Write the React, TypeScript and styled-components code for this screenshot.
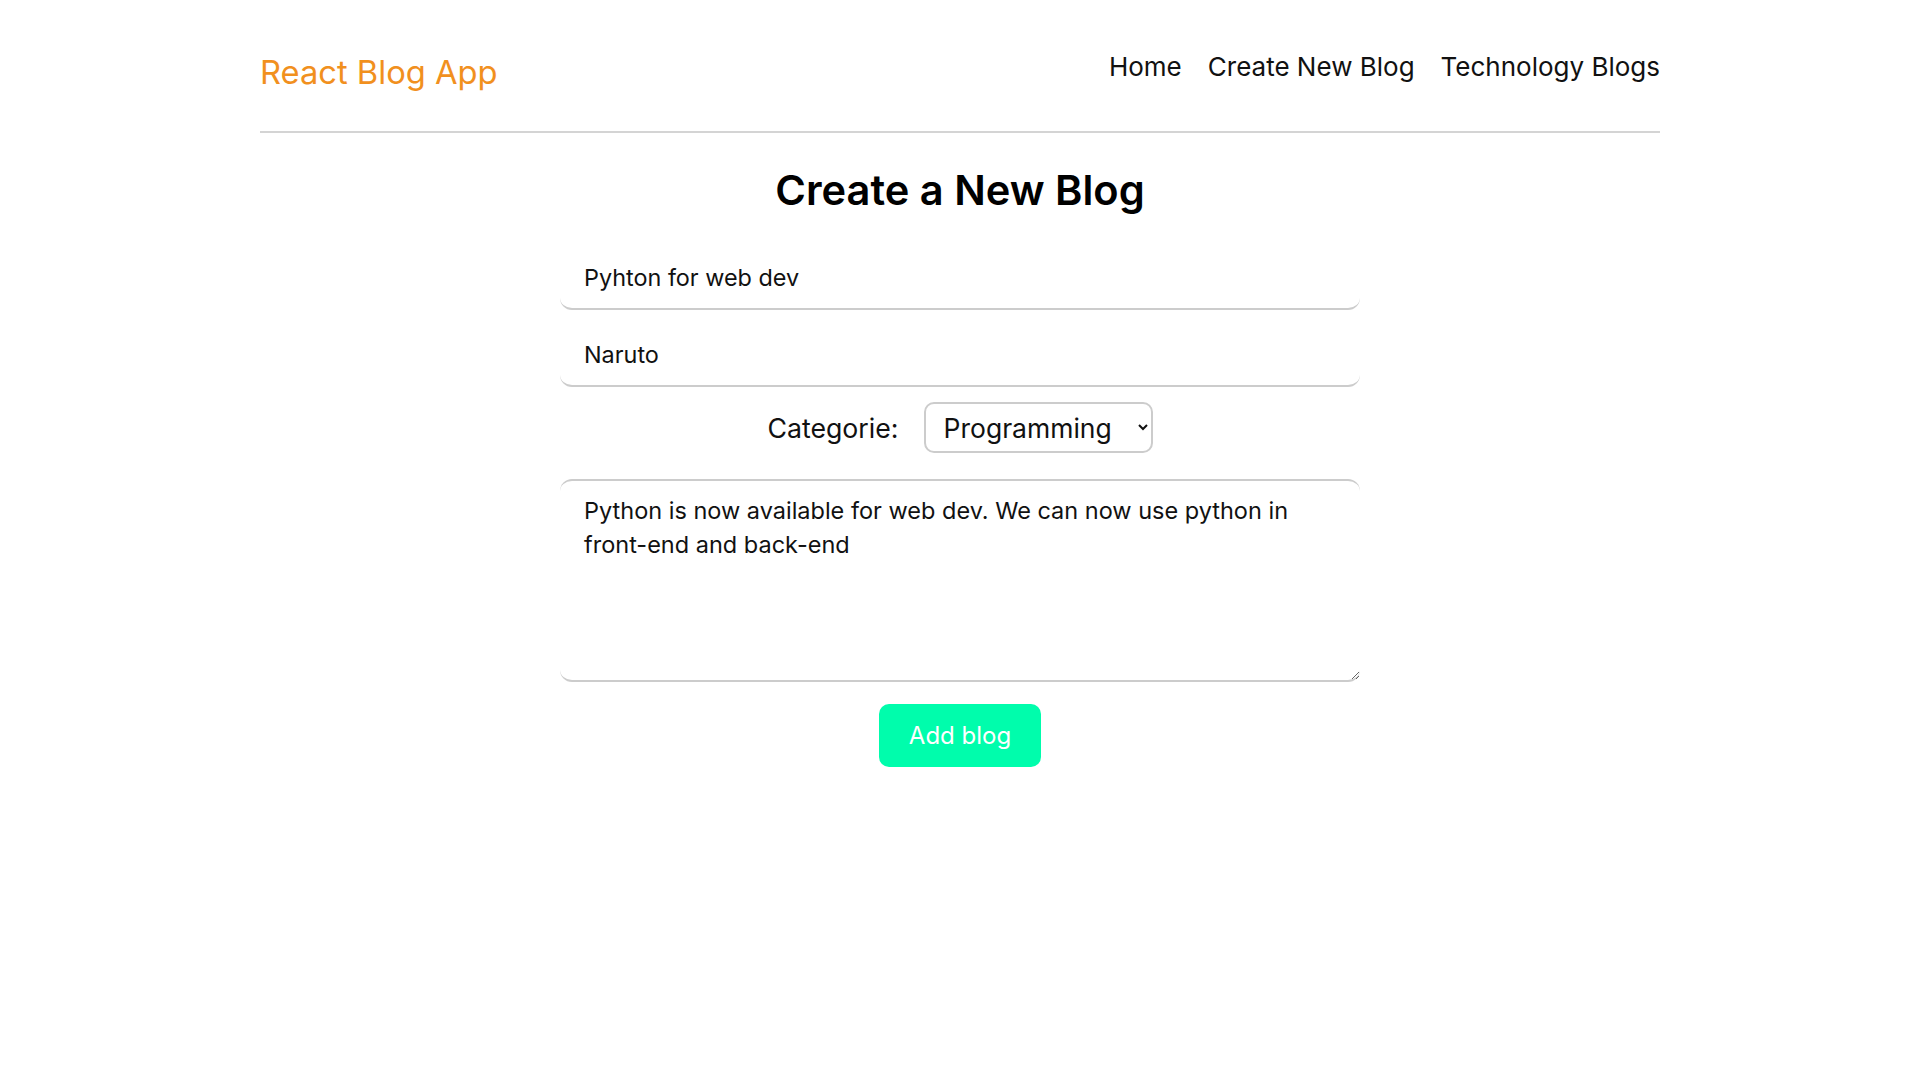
import { useEffect, useRef, useState } from 'react';
import styled, { createGlobalStyle } from 'styled-components';

const GlobalStyle = createGlobalStyle`
  * {
    box-sizing: border-box;
  }

  body {
    margin: 0;
    background: #ffffff;
    color: #111111;
    font-family: Inter, 'Noto Sans', 'Liberation Sans', sans-serif;
  }
`;

const categories = ['Programming', 'Technology', 'Lifestyle', 'Travel'];

export default function App() {
  const [title, setTitle] = useState('Pyhton for web dev');
  const [author, setAuthor] = useState('Naruto');
  const [category, setCategory] = useState('Programming');
  const [body, setBody] = useState(
    'Python is now available for web dev. We can now use python in front-end and back-end'
  );
  const bodyRef = useRef<HTMLTextAreaElement>(null);

  useEffect(() => {
    const el = bodyRef.current;
    if (!el) return;
    el.focus();
    el.setSelectionRange(el.value.length, el.value.length);
  }, []);

  return (
    <>
      <GlobalStyle />
      <Page>
        <Navbar>
          <Logo>React Blog App</Logo>
          <Links>
            <NavLink href="#">Home</NavLink>
            <NavLink href="#">Create New Blog</NavLink>
            <NavLink href="#">Technology Blogs</NavLink>
          </Links>
        </Navbar>

        <Create>
          <Heading>Create a New Blog</Heading>
          <Form onSubmit={(e) => e.preventDefault()}>
            <TextInput
              type="text"
              value={title}
              onChange={(e) => setTitle(e.target.value)}
            />
            <TextInput
              type="text"
              value={author}
              $top={13}
              onChange={(e) => setAuthor(e.target.value)}
            />
            <CategoryRow>
              <Label htmlFor="category">Categorie:</Label>
              <Select
                id="category"
                value={category}
                onChange={(e) => setCategory(e.target.value)}
              >
                {categories.map((c) => (
                  <option key={c} value={c}>
                    {c}
                  </option>
                ))}
              </Select>
            </CategoryRow>
            <BodyArea
              ref={bodyRef}
              value={body}
              onChange={(e) => setBody(e.target.value)}
            />
            <AddButton type="submit">Add blog</AddButton>
          </Form>
        </Create>
      </Page>
    </>
  );
}

/* STYLES **********************************************************/

const Page = styled.div`
  max-width: 1400px;
  margin: 0 auto;
`;

const Navbar = styled.nav`
  display: flex;
  align-items: flex-start;
  justify-content: space-between;
  height: 133px;
  padding-top: 51px;
  border-bottom: 2px solid #d4d4d4;
`;

const Logo = styled.h1`
  margin: 0;
  padding-top: 1px;
  font-size: 32.7px;
  font-weight: 400;
  line-height: 40px;
  color: #f1901e;
`;

const Links = styled.div`
  display: flex;
  gap: 26px;
`;

const NavLink = styled.a`
  font-size: 26px;
  line-height: 31px;
  color: #111111;
  text-decoration: none;
`;

const Create = styled.main`
  display: flex;
  flex-direction: column;
  align-items: center;
  padding-top: 33px;
`;

const Heading = styled.h2`
  margin: 0;
  font-size: 41.6px;
  line-height: 48px;
  font-weight: 600;
  color: #000000;
`;

const Form = styled.form`
  display: flex;
  flex-direction: column;
  align-items: center;
  width: 800px;
  margin-top: 32px;
`;

const TextInput = styled.input<{ $top?: number }>`
  width: 100%;
  height: 64px;
  margin-top: ${(p) => p.$top ?? 0}px;
  padding: 0 24px;
  border: none;
  border-bottom: 2px solid #cccccc;
  border-radius: 12px;
  font-family: inherit;
  font-size: 23.4px;
  color: #111111;
  background: #ffffff;
  outline: none;
`;

const CategoryRow = styled.div`
  display: flex;
  align-items: center;
  gap: 25px;
  margin-top: 15px;
`;

const Label = styled.label`
  font-size: 26.7px;
  color: #111111;
`;

const Select = styled.select`
  width: 229px;
  height: 51px;
  padding: 0 10px 0 14px;
  border: 2px solid #cccccc;
  border-radius: 10px;
  background: #ffffff;
  font-family: inherit;
  font-size: 26.5px;
  color: #111111;
  outline: none;
`;

const BodyArea = styled.textarea`
  width: 100%;
  height: 203px;
  margin-top: 26px;
  padding: 13px 24px;
  border: none;
  border-top: 2px solid #cccccc;
  border-bottom: 2px solid #cccccc;
  border-radius: 12px;
  font-family: inherit;
  font-size: 23.5px;
  line-height: 34px;
  color: #111111;
  background: #ffffff;
  outline: none;
  caret-color: #000000;
`;

const AddButton = styled.button`
  width: 162px;
  height: 63px;
  margin-top: 22px;
  border: none;
  border-radius: 10px;
  background: #00fdac;
  color: #ffffff;
  font-family: inherit;
  font-size: 24px;
  cursor: pointer;
`;
